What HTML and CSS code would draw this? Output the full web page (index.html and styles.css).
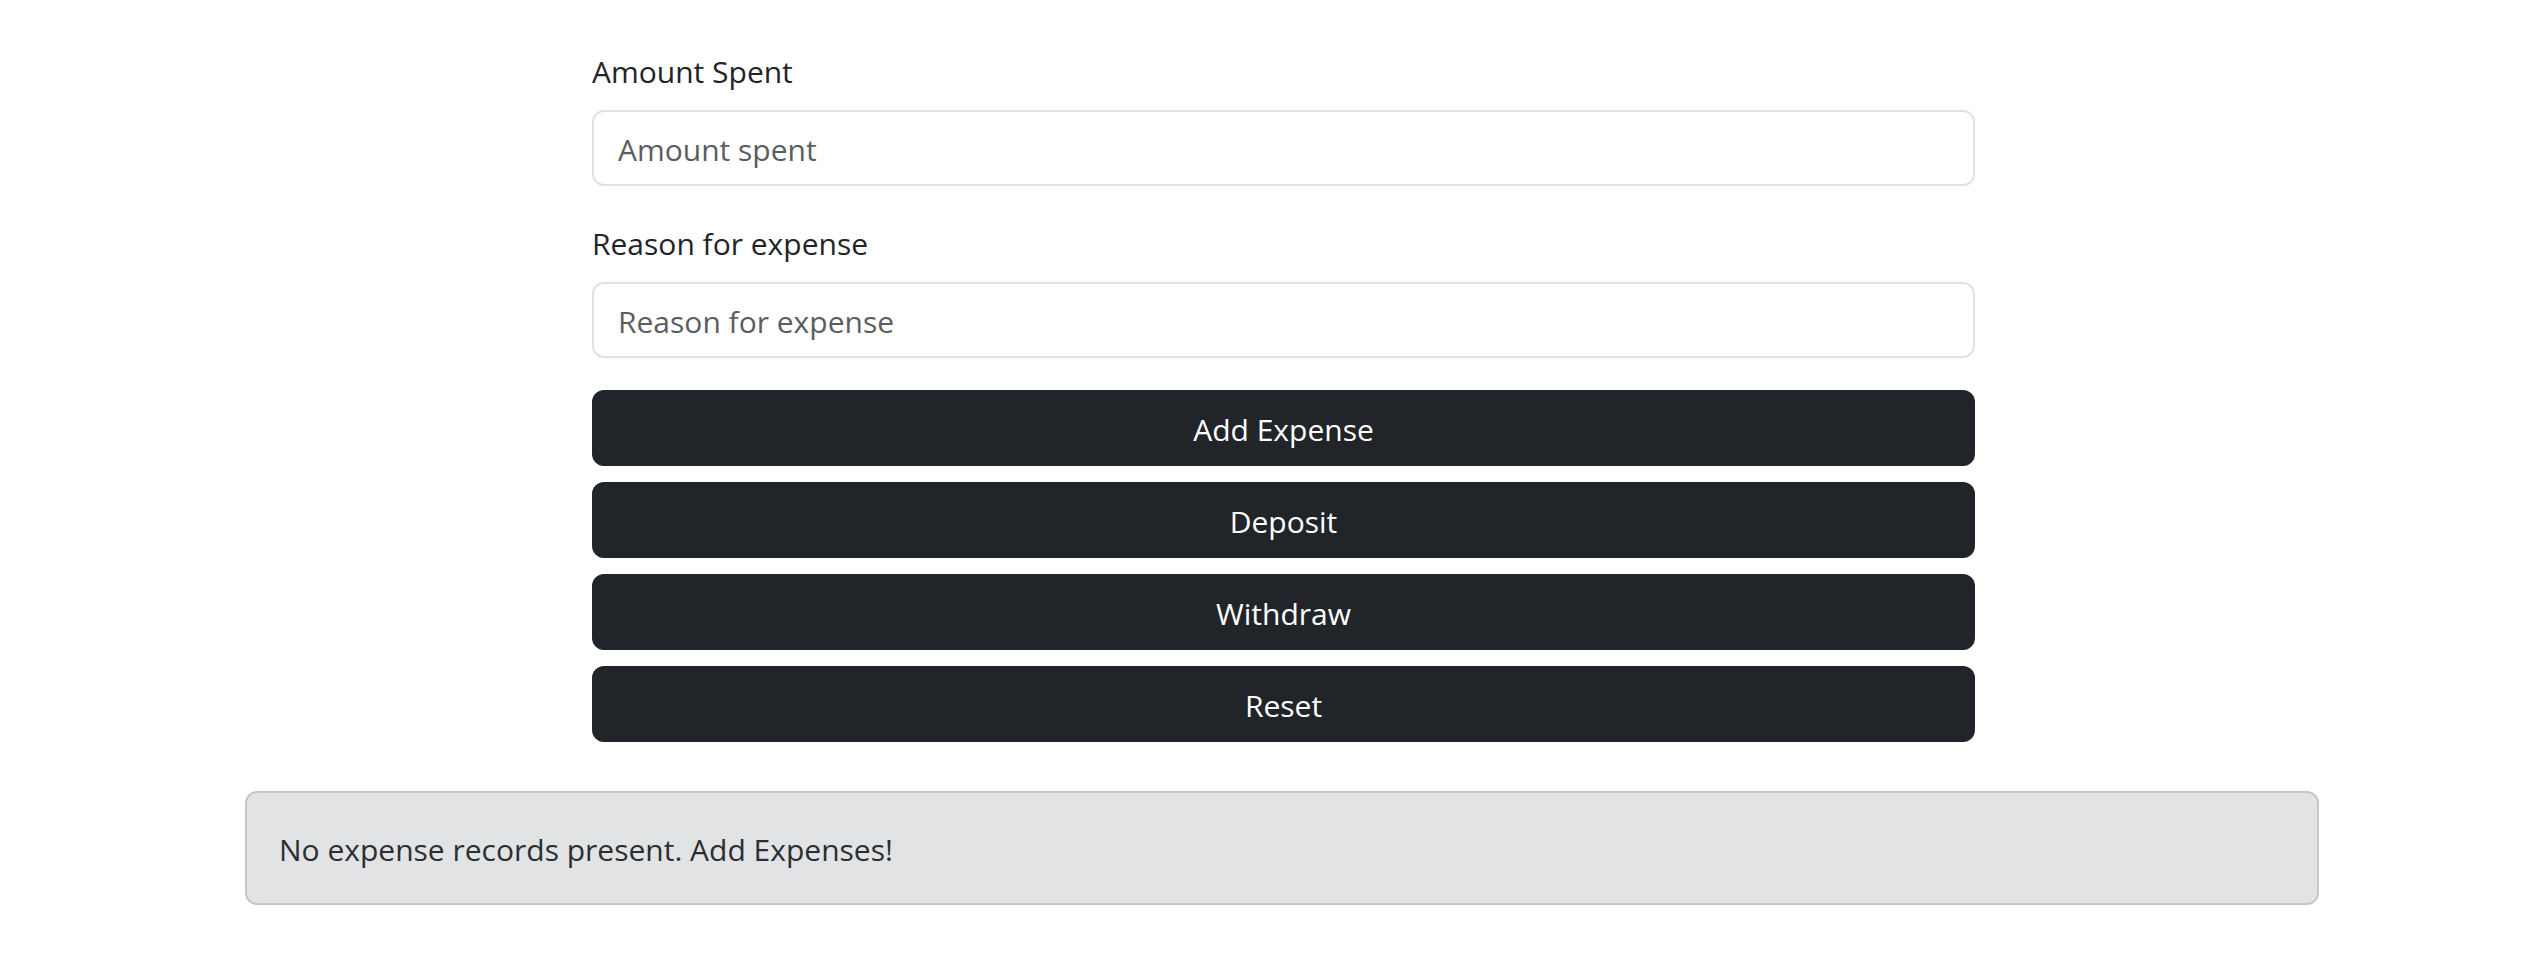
FILE: index.html
```html
<!DOCTYPE html>
<html lang="en">
<head>
<meta charset="utf-8">
<title>Expense Tracker</title>
<link rel="stylesheet" href="styles.css">
</head>
<body>
<div class="container">
  <form class="expense-form">
    <div class="field">
      <label class="field-label" for="amount">Amount Spent</label>
      <input class="field-input" id="amount" type="text" placeholder="Amount spent">
    </div>
    <div class="field">
      <label class="field-label" for="reason">Reason for expense</label>
      <input class="field-input" id="reason" type="text" placeholder="Reason for expense">
    </div>
    <div class="actions">
      <button type="button" class="btn">Add Expense</button>
      <button type="button" class="btn">Deposit</button>
      <button type="button" class="btn">Withdraw</button>
      <button type="button" class="btn">Reset</button>
    </div>
  </form>
  <div class="alert">No expense records present. Add Expenses!</div>
</div>
</body>
</html>
```

FILE: styles.css
```css
html, body {
  margin: 0;
  padding: 0;
  background: #ffffff;
}

body {
  font-family: "Open Sans", "Noto Sans", sans-serif;
  font-size: 30px;
  color: #212529;
}

.container {
  width: 2074px;
  margin-left: 245px;
  padding-top: 46px;
}

.expense-form {
  width: 1383px;
  margin-left: 347px;
  display: flex;
  flex-direction: column;
}

.field {
  display: flex;
  flex-direction: column;
  margin-bottom: 32px;
}

.field-label {
  display: block;
  box-sizing: border-box;
  height: 48px;
  line-height: 48px;
  padding-top: 2px;
  margin-bottom: 16px;
  color: #212529;
}

.field-input {
  box-sizing: border-box;
  height: 76px;
  width: 100%;
  padding: 3px 24px 0 24px;
  border: 2px solid #dee2e6;
  border-radius: 12px;
  font-family: inherit;
  font-size: 30px;
  color: #212529;
  background: #ffffff;
  outline: none;
}

.field-input::placeholder {
  color: #5b5e61;
  opacity: 1;
}

.actions {
  display: flex;
  flex-direction: column;
  gap: 16px;
}

.btn {
  box-sizing: border-box;
  height: 76px;
  width: 100%;
  border: 2px solid #212529;
  border-radius: 12px;
  background: #212529;
  color: #ffffff;
  font-family: inherit;
  font-size: 30px;
  line-height: 48px;
  padding: 3px 0 0 0;
  cursor: pointer;
}

.alert {
  box-sizing: border-box;
  margin-top: 49px;
  height: 114px;
  padding: 33px 32px 29px 32px;
  border: 2px solid #c4c8cb;
  border-radius: 12px;
  background: #e2e3e5;
  color: #2b2f32;
  line-height: 48px;
}
```
